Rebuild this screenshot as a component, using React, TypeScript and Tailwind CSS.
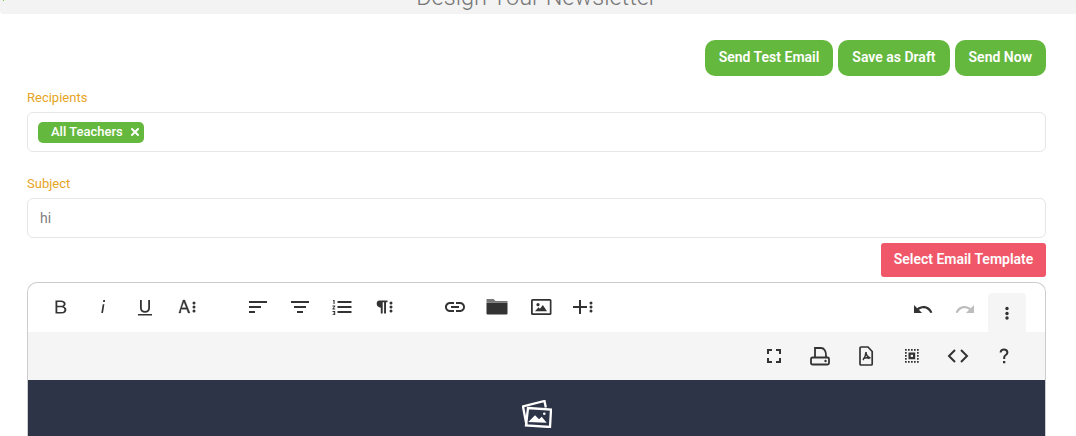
import type { FC, ReactNode } from "react";
import { X } from "lucide-react";

const Dots: FC<{ x: number }> = ({ x }) => (
  <g fill="#333">
    <circle cx={x} cy="9" r="1.500" />
    <circle cx={x} cy="13" r="1.500" />
    <circle cx={x} cy="17" r="1.500" />
  </g>
);

const ToolIcon: FC<{ wide?: boolean; children: ReactNode }> = ({ wide, children }) => (
  <svg
    viewBox={wide ? "0 0 38 24" : "0 0 24 24"}
    className={wide ? "w-[38px] h-6" : "w-6 h-6"}
    fill="#333"
  >
    {children}
  </svg>
);

const ToolButton: FC<{ active?: boolean; children: ReactNode }> = ({ active, children }) => (
  <div
    className={`mx-[2px] w-[38px] h-[39px] flex items-center justify-center ${
      active ? "bg-[#f5f5f5] rounded-t" : "pb-[11px]"
    }`}
  >
    {children}
  </div>
);

const Label: FC<{ text: string; className: string }> = ({ text, className }) => (
  <p className={`h-[17px] leading-[17px] text-[13px] text-[#e6a423] ${className}`}>{text}</p>
);

const actions = ["Send Test Email", "Save as Draft", "Send Now"];

const App: FC = () => {
  return (
    <div className="w-[1076px] h-[436px] overflow-hidden bg-white font-[Roboto,sans-serif] flex flex-col">
      <div className="relative h-[14px] shrink-0 overflow-hidden bg-[#f3f3f3] rounded-bl">
        <div className="absolute left-[3px] top-0 w-px h-px bg-[#7ac943]" />
        <h1 className="-mt-[16px] pr-[3px] text-center text-[23.5px] leading-[26px] font-light text-[#777]">
          Design Your Newsletter
        </h1>
      </div>

      <div className="flex-1 flex flex-col pl-[27px] pr-[30px] min-h-0">
        <div className="mt-[26px] flex justify-end gap-[5px]">
          {actions.map((action) => (
            <button
              key={action}
              className="h-9 px-[14px] pb-[2px] rounded-[10px] bg-[#65b83e] text-white text-sm font-semibold"
            >
              {action}
            </button>
          ))}
        </div>

        <Label text="Recipients" className="mt-[13px] mb-[6px]" />
        <div className="h-10 border border-[#e6e6e6] rounded-md flex items-center pl-[10px]">
          <div className="h-[21px] w-[106px] pl-[13px] rounded-[5px] bg-[#65b83e] text-white text-[13px] font-medium flex items-center gap-[6px]">
            All Teachers
            <X size={12} strokeWidth={4} />
          </div>
        </div>

        <Label text="Subject" className="mt-[23px] mb-[6px]" />
        <div className="h-10 border border-[#e6e6e6] rounded-md flex items-center px-3 text-sm text-[#808080]">
          hi
        </div>

        <div className="mt-[5px] flex justify-end">
          <button className="h-[34px] w-[165px] pb-[2px] rounded-[3px] bg-[#f0586a] text-white text-sm font-semibold">
            Select Email Template
          </button>
        </div>

        <div className="mt-[5px] flex-1 flex flex-col border border-b-0 border-[#cccccc] rounded-t-[10px] overflow-hidden">
          <div className="h-[49px] pt-[10px] pl-3 pr-[17px] flex shrink-0">
            <div className="flex">
              <ToolButton>
                <ToolIcon>
                  <path
                    fillRule="evenodd"
                    d="M6.500 5.500h5.500c2.800 0 4.600 1.300 4.600 3.200 0 1.400-.8 2.400-2.100 2.800 1.700.4 2.900 1.600 2.900 3.300 0 2.200-1.900 3.700-4.700 3.700H6.500V5.500zm1.800 1.500v3.800h3.600c1.600 0 2.800-.7 2.800-1.900S13.500 7 11.900 7H8.300zm0 5.300v4.700h4.100c1.800 0 3-.9 3-2.300s-1.200-2.400-3-2.400H8.300z"
                  />
                </ToolIcon>
              </ToolButton>
              <ToolButton>
                <ToolIcon>
                  <path d="M12.300 5h1.800l-.3 1.900H12zM11.700 9.300h1.700L12 18h-1.700z" />
                </ToolIcon>
              </ToolButton>
              <ToolButton>
                <ToolIcon>
                  <path d="M5 19h14v1.600H5zM7 5h1.800v7.800c0 2.200 1.300 3.300 3.200 3.300s3.200-1.100 3.200-3.300V5H17v7.900c0 3.100-2 4.800-5 4.800s-5-1.700-5-4.800z" />
                </ToolIcon>
              </ToolButton>
              <ToolButton>
                <ToolIcon wide>
                  <path
                    d="M15 5h1.800l5.200 13h-1.900l-1.400-3.700h-5.600L12.700 18h-1.900L15 5zm.9 1.900-2.200 5.900h4.500z"
                    stroke="#333"
                    strokeWidth="0.3"
                  />
                  <g transform="translate(0 -1)">
                    <Dots x={26} />
                  </g>
                </ToolIcon>
              </ToolButton>
            </div>

            <div className="flex ml-[29px]">
              <ToolButton>
                <ToolIcon>
                  <path d="M3 18h6v-2H3v2zM3 11v2h12v-2H3zM3 6v2h18V6H3z" />
                </ToolIcon>
              </ToolButton>
              <ToolButton>
                <ToolIcon>
                  <path d="M9 18h6v-2H9v2zM6 11v2h12v-2H6zM3 6v2h18V6H3z" />
                </ToolIcon>
              </ToolButton>
              <ToolButton>
                <ToolIcon>
                  <path d="M2.500 16h2.700v4.100H2.500v-.9h1.700v-.7h-1v-.7h1v-.8H2.500zM3.300 5h1.300v4H3.500V6H2.800zM2.500 10.500h2.700v1l-1.600 2h1.600v.9H2.500v-.9l1.700-2H2.500zM7.500 6v2h14V6h-14zm0 12h14v-2h-14v2zm0-5h14v-2h-14v2z" />
                </ToolIcon>
              </ToolButton>
              <ToolButton>
                <ToolIcon wide>
                  <path
                    d="M15 5.500h8v1.700h-1.500v11.300h-1.900V7.200h-1.400v11.300h-1.900v-5.800c-2.300 0-4.100-1.500-4.100-3.600S12.700 5.500 15 5.500z"
                    transform="translate(-0.500 0)"
                  />
                  <g transform="translate(0 -1)">
                    <Dots x={26} />
                  </g>
                </ToolIcon>
              </ToolButton>
            </div>

            <div className="flex ml-[29px]">
              <ToolButton>
                <ToolIcon>
                  <path d="M3.900 12c0-1.700 1.400-3.100 3.100-3.100h4V7H7c-2.800 0-5 2.200-5 5s2.200 5 5 5h4v-1.900H7c-1.700 0-3.100-1.400-3.100-3.100zM8 13h8v-2H8v2zM17 7h-4v1.900h4c1.700 0 3.100 1.400 3.100 3.100s-1.400 3.100-3.100 3.100h-4V17h4c2.800 0 5-2.200 5-5s-2.200-5-5-5z" />
                </ToolIcon>
              </ToolButton>
              <ToolButton>
                <ToolIcon>
                  <path d="M1.500 4h7l2 2h12v1.300h-21z" fill="#777" />
                  <path d="M1.500 7.500h21v11a1 1 0 0 1-1 1h-19a1 1 0 0 1-1-1z" />
                </ToolIcon>
              </ToolButton>
              <div className="ml-[2px]">
                <ToolButton>
                  <ToolIcon>
                    <path
                      fillRule="evenodd"
                      d="M3.500 4h17.500a1.500 1.500 0 0 1 1.500 1.500v13a1.500 1.500 0 0 1-1.500 1.500H3.500A1.500 1.500 0 0 1 2 18.500v-13A1.500 1.500 0 0 1 3.500 4zm.300 1.800v12.400h17V5.800z"
                    />
                    <circle cx="9" cy="9.700" r="1.600" />
                    <path d="M6 16.300l3.500-4 1.500 1.500 2.800-3.800 4.200 6.300z" />
                  </ToolIcon>
                </ToolButton>
              </div>
              <ToolButton>
                <ToolIcon wide>
                  <path d="M15 5h2v6h6v2h-6v6h-2v-6H9v-2h6z" />
                  <g transform="translate(0 -1)">
                    <Dots x={27} />
                  </g>
                </ToolIcon>
              </ToolButton>
            </div>

            <div className="flex ml-auto">
              <ToolButton>
                <ToolIcon>
                  <path
                    transform="translate(1.200 3.700) scale(0.9)"
                    d="M12.500 8c-2.650 0-5.050.99-6.900 2.600L2 7v9h9l-3.620-3.620c1.390-1.160 3.160-1.880 5.120-1.880 3.540 0 6.550 2.310 7.600 5.500l2.370-.78C21.080 11.030 17.150 8 12.500 8z"
                  />
                </ToolIcon>
              </ToolButton>
              <ToolButton>
                <ToolIcon>
                  <path
                    fill="#bdbdbd"
                    transform="translate(1.200 3.700) scale(0.9)"
                    d="M18.400 10.600C16.550 8.990 14.150 8 11.500 8c-4.650 0-8.580 3.030-9.960 7.220L3.900 16c1.050-3.190 4.050-5.500 7.600-5.500 1.950 0 3.730.72 5.120 1.880L13 16h9V7l-3.600 3.600z"
                  />
                </ToolIcon>
              </ToolButton>
              <ToolButton active>
                <ToolIcon>
                  <circle cx="12" cy="7.500" r="1.700" />
                  <circle cx="12" cy="12.500" r="1.700" />
                  <circle cx="12" cy="17" r="1.700" />
                </ToolIcon>
              </ToolButton>
            </div>
          </div>

          <div className="h-12 shrink-0 bg-[#f5f5f5] flex items-center justify-end pr-[18px]">
            <div className="w-[46px] flex justify-center">
              <ToolIcon>
                <path d="M5 5h5v2H7v3H5zM14 5h5v5h-2V7h-3zM5 14h2v3h3v2H5zM17 14h2v5h-5v-2h3z" />
              </ToolIcon>
            </div>
            <div className="w-[46px] flex justify-center">
              <ToolIcon>
                <g fill="none" stroke="#333" strokeWidth="1.800">
                  <path d="M7 13.500V4h6c3 0 5 3 5 7.500v2" />
                  <rect x="3" y="13.500" width="18" height="7" rx="1.500" />
                </g>
                <circle cx="17.500" cy="17" r="1.200" />
              </ToolIcon>
            </div>
            <div className="w-[46px] flex justify-center">
              <ToolIcon>
                <g fill="none" stroke="#333">
                  <path strokeWidth="1.700" d="M7 3h7l4.200 4.500V20a1 1 0 0 1-1 1H7a1 1 0 0 1-1-1V4a1 1 0 0 1 1-1z" />
                  <path
                    strokeWidth="1.500"
                    d="M12 8c0 3-1 5-3 8M12 8c0 3 1.500 5 4.500 6M9.500 14.500c2-1 4-1 6 0"
                  />
                </g>
              </ToolIcon>
            </div>
            <div className="w-[46px] flex justify-center">
              <ToolIcon>
                <path d="M5 5h1.700v1.700H5zM8 5h1.700v1.700H8zM11 5h1.700v1.700H11zM14 5h1.700v1.700H14zM17 5h1.700v1.700H17zM5 8h1.700v1.700H5zM17 8h1.700v1.700H17zM5 11h1.700v1.700H5zM17 11h1.700v1.700H17zM5 14h1.700v1.700H5zM17 14h1.700v1.700H17zM5 17h1.700v1.700H5zM8 17h1.700v1.700H8zM11 17h1.700v1.700H11zM14 17h1.700v1.700H14zM17 17h1.700v1.700H17z" />
                <path fillRule="evenodd" d="M8.500 8.500h6.700v6.700H8.500zm2.200 2.200v2.300h2.300v-2.300z" />
              </ToolIcon>
            </div>
            <div className="w-[46px] flex justify-center">
              <ToolIcon>
                <path fill="none" stroke="#333" strokeWidth="2" d="M9 6l-6 6 6 6M15 6l6 6-6 6" />
              </ToolIcon>
            </div>
            <div className="w-[46px] flex justify-center">
              <ToolIcon>
                <path d="M11.200 15h2v-1.200c0-1 .5-1.500 1.400-2.200 1-.8 1.800-1.700 1.800-3.300C16.400 6 14.600 4.500 12 4.500S7.700 6.100 7.600 8.500h2c.1-1.300 1-2.100 2.300-2.100 1.400 0 2.400.8 2.400 2 0 .9-.5 1.400-1.300 2-1.200 1-1.800 1.700-1.800 3.100zM11 17h2.300v2.300H11z" />
              </ToolIcon>
            </div>
          </div>

          <div className="flex-1 bg-[#2e3448] flex justify-center pt-[20px]">
            <svg
              viewBox="0 0 30 28"
              className="w-[30px] h-[28px] shrink-0"
              fill="none"
              stroke="white"
              strokeWidth="2.300"
            >
              <path d="M4.500 25 1 6.500 22.500 1l1.300 6.500" />
              <path d="M6 8l23 1.500L28 27 4 25.500z" />
              <path d="M6.300 22 13 15.300l4 4 2.700-2.600 5 6z" fill="white" stroke="none" />
              <circle cx="22.300" cy="13.700" r="1.300" fill="white" stroke="none" />
            </svg>
          </div>
        </div>
      </div>
    </div>
  );
};

export default App;
